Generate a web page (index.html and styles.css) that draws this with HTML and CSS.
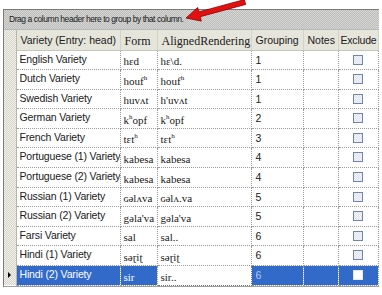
FILE: index.html
```html
<!DOCTYPE html>
<html lang="en">

<head>
    <meta charset="UTF-8">
    <title>Variety grid</title>
    <link rel="stylesheet" href="styles.css">
</head>

<body>
    <div class="grid">
        <div class="group-panel">Drag a column header here to group by that column.</div>
        <table>
            <colgroup>
                <col class="c-row">
                <col class="c-variety">
                <col class="c-form">
                <col class="c-aligned">
                <col class="c-group">
                <col class="c-notes">
                <col class="c-exclude">
            </colgroup>
            <thead>
                <tr>
                    <th class="rowhead"></th>
                    <th>Variety (Entry: head)</th>
                    <th class="ipa">Form</th>
                    <th class="ipa">AlignedRendering</th>
                    <th>Grouping</th>
                    <th>Notes</th>
                    <th class="tight">Exclude</th>
                </tr>
            </thead>
            <tbody>
                <tr>
                    <td class="rowhead"></td>
                    <td>English Variety</td>
                    <td class="ipa">hɛd</td>
                    <td class="ipa">hɛ\d.</td>
                    <td class="num">1</td>
                    <td></td>
                    <td class="chk"><span class="box"></span></td>
                </tr>
                <tr>
                    <td class="rowhead"></td>
                    <td>Dutch Variety</td>
                    <td class="ipa">houf<sup>h</sup></td>
                    <td class="ipa">houf<sup>h</sup></td>
                    <td class="num">1</td>
                    <td></td>
                    <td class="chk"><span class="box"></span></td>
                </tr>
                <tr>
                    <td class="rowhead"></td>
                    <td>Swedish Variety</td>
                    <td class="ipa">huvʌt</td>
                    <td class="ipa">h'uvʌt</td>
                    <td class="num">1</td>
                    <td></td>
                    <td class="chk"><span class="box"></span></td>
                </tr>
                <tr>
                    <td class="rowhead"></td>
                    <td>German Variety</td>
                    <td class="ipa">k<sup>h</sup>opf</td>
                    <td class="ipa">k<sup>h</sup>opf</td>
                    <td class="num">2</td>
                    <td></td>
                    <td class="chk"><span class="box"></span></td>
                </tr>
                <tr>
                    <td class="rowhead"></td>
                    <td>French Variety</td>
                    <td class="ipa">tɛt<sup>h</sup></td>
                    <td class="ipa">tɛt<sup>h</sup></td>
                    <td class="num">3</td>
                    <td></td>
                    <td class="chk"><span class="box"></span></td>
                </tr>
                <tr>
                    <td class="rowhead"></td>
                    <td>Portuguese (1) Variety</td>
                    <td class="ipa">kabesa</td>
                    <td class="ipa">kabesa</td>
                    <td class="num">4</td>
                    <td></td>
                    <td class="chk"><span class="box"></span></td>
                </tr>
                <tr>
                    <td class="rowhead"></td>
                    <td>Portuguese (2) Variety</td>
                    <td class="ipa">kabesa</td>
                    <td class="ipa">kabesa</td>
                    <td class="num">4</td>
                    <td></td>
                    <td class="chk"><span class="box"></span></td>
                </tr>
                <tr>
                    <td class="rowhead"></td>
                    <td>Russian (1) Variety</td>
                    <td class="ipa">ɢəlʌva</td>
                    <td class="ipa">ɢəlʌ.va</td>
                    <td class="num">5</td>
                    <td></td>
                    <td class="chk"><span class="box"></span></td>
                </tr>
                <tr>
                    <td class="rowhead"></td>
                    <td>Russian (2) Variety</td>
                    <td class="ipa">gəla'va</td>
                    <td class="ipa">gəla'va</td>
                    <td class="num">5</td>
                    <td></td>
                    <td class="chk"><span class="box"></span></td>
                </tr>
                <tr>
                    <td class="rowhead"></td>
                    <td>Farsi Variety</td>
                    <td class="ipa">sal</td>
                    <td class="ipa">sal..</td>
                    <td class="num">6</td>
                    <td></td>
                    <td class="chk"><span class="box"></span></td>
                </tr>
                <tr>
                    <td class="rowhead"></td>
                    <td>Hindi (1) Variety</td>
                    <td class="ipa">səɽiʈ</td>
                    <td class="ipa">səɽiʈ</td>
                    <td class="num">6</td>
                    <td></td>
                    <td class="chk"><span class="box"></span></td>
                </tr>
                <tr class="selected">
                    <td class="rowhead"><span class="pointer"></span></td>
                    <td>Hindi (2) Variety</td>
                    <td class="ipa">sir</td>
                    <td class="ipa editing">sir..</td>
                    <td class="num">6</td>
                    <td></td>
                    <td class="chk"><span class="box"></span></td>
                </tr>
            </tbody>
        </table>

        <!-- red arrow pointing at the group panel -->
        <svg class="arrow" width="66" height="26" viewBox="0 0 66 26">
            <path d="M3 19 L14.7 8.5 L15.8 12.9 L61.3 0.6 L62.7 5.4 L17.2 17.7 L18.3 22.1 Z" fill="#e41010" stroke="#8a0000" stroke-width="0.8"/>
        </svg>
    </div>
</body>

</html>
```

FILE: styles.css
```css
body {
    margin: 0;
    background-color: #fff;
    font-family: 'Liberation Sans', Arial, sans-serif;
}

.grid {
    position: relative;
    width: 375px;
    margin: 9px 0 0 3px;
    border-top: 1px solid #7a7a7a;
    border-left: 1px solid #7a7a7a;
    border-bottom: 1px solid #a0a0a0;
}

.group-panel {
    height: 19px;
    line-height: 19px;
    padding-left: 5px;
    font-size: 8.5px;
    letter-spacing: -0.45px;
    color: #202020;
    background: repeating-conic-gradient(#bdbdbd 0 25%, #d6d6d2 0 50%) 0 0 / 2px 2px;
    border-bottom: 1px solid #b8b8b8;
}

table {
    width: 374px;
    table-layout: fixed;
    border-collapse: collapse;
}

.c-row {
    width: 12px;
}

.c-variety {
    width: 104px;
}

.c-form {
    width: 37px;
}

.c-aligned {
    width: 94px;
}

.c-group {
    width: 52px;
}

.c-notes {
    width: 35px;
}

.c-exclude {
    width: 40px;
}

thead tr {
    height: 20px;
}

th {
    padding: 0 0 0 4px;
    text-align: left;
    font-weight: normal;
    font-size: 10.5px;
    line-height: 14px;
    color: #202020;
    white-space: nowrap;
    overflow: hidden;
    background: repeating-conic-gradient(#dcdad0 0 25%, #f0efe8 0 50%) 0 0 / 2px 2px;
    border-right: 1px solid #d4d2c6;
    border-bottom: 1px solid #c8c6ba;
}

th.ipa {
    font-family: 'Liberation Serif', 'DejaVu Serif', serif;
    font-size: 12px;
    padding-top: 3px;
}

th.tight {
    padding-left: 2px;
    letter-spacing: -0.2px;
}

tbody tr {
    height: 19.6px;
}

td {
    padding: 1px 0 0 3px;
    font-size: 10.5px;
    letter-spacing: -0.15px;
    line-height: 14px;
    color: #202020;
    white-space: nowrap;
    overflow: hidden;
    vertical-align: top;
    border-right: 1px dotted #9a9a9a;
    border-bottom: 1px dotted #9a9a9a;
}

td.ipa {
    font-family: 'Liberation Serif', 'DejaVu Serif', serif;
    font-size: 11px;
    letter-spacing: 0;
    line-height: 13px;
    vertical-align: bottom;
    padding: 0 0 1px 3px;
}

td.ipa sup {
    font-size: 7px;
    line-height: 0;
}

td.num {
    padding: 2px 0 0 4px;
}

.rowhead {
    padding: 0;
    background: repeating-conic-gradient(#d6d4ca 0 25%, #f2f1ea 0 50%) 0 0 / 2px 2px;
    border-right: 1px solid #b8b6aa;
    border-bottom: none;
}

td.chk {
    text-align: center;
    padding: 4px 0 0 0;
    line-height: 0;
}

.box {
    display: inline-block;
    width: 8px;
    height: 8px;
    border: 1px solid #6f84b0;
    background: repeating-conic-gradient(#dde2ee 0 25%, #f6f6fa 0 50%) 0 0 / 2px 2px;
}

.selected td {
    color: #fff;
    background: repeating-conic-gradient(#2a60c4 0 25%, #3a74d0 0 50%) 0 0 / 2px 2px;
}

.selected td.num {
    color: #b8c8ec;
}

.selected td.rowhead {
    background: repeating-conic-gradient(#d6d4ca 0 25%, #f2f1ea 0 50%) 0 0 / 2px 2px;
}

.selected td.editing {
    color: #202020;
    background: #fff;
    border: 1px dotted #707070;
}

.selected .box {
    border-color: #e8e8e8;
    background: #fff;
}

.pointer {
    display: block;
    width: 0;
    height: 0;
    margin: 6px 0 0 4px;
    border-top: 3px solid transparent;
    border-bottom: 3px solid transparent;
    border-left: 3px solid #000;
}

.arrow {
    position: absolute;
    left: 179px;
    top: -11px;
}
```
